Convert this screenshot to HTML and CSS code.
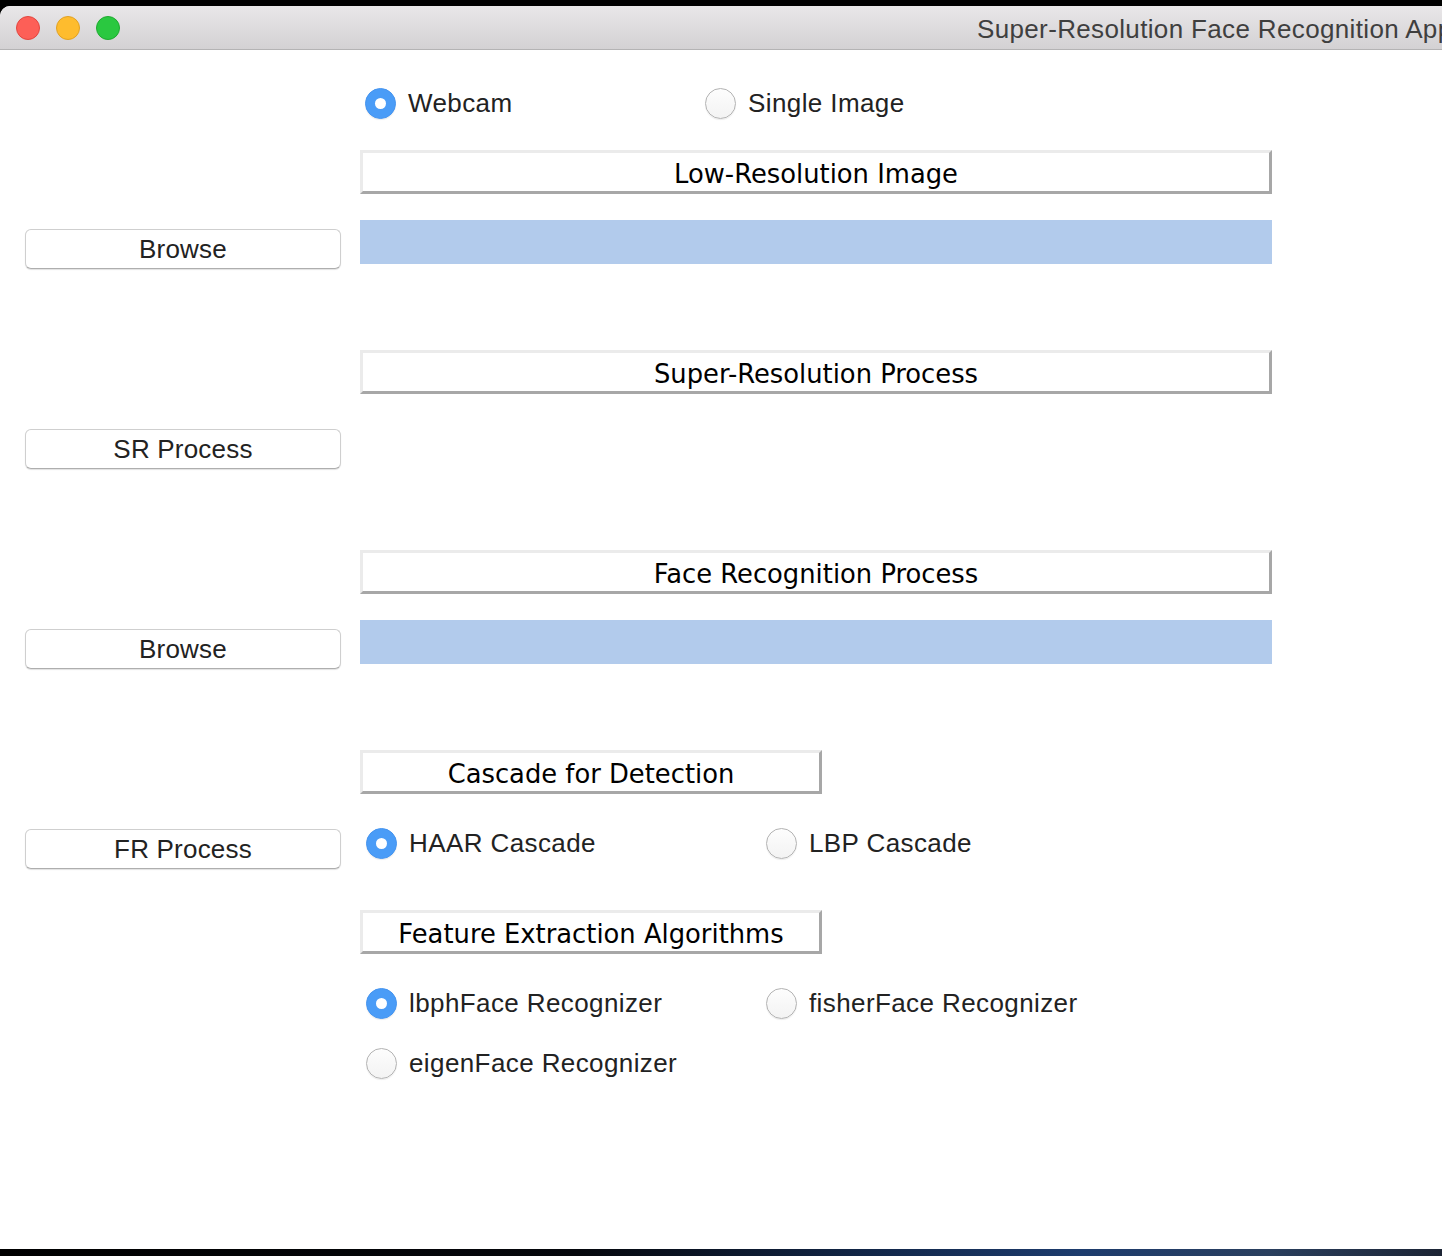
FILE: index.html
```html
<!DOCTYPE html>
<html>
<head>
<meta charset="utf-8">
<title>Super-Resolution Face Recognition App</title>
<link rel="stylesheet" href="styles.css">
</head>
<body>
<div class="screen">
  <div class="topband"></div>
  <div class="window">
    <div class="titlebar">
      <span class="light red"></span>
      <span class="light yellow"></span>
      <span class="light green"></span>
      <span class="title">Super-Resolution Face Recognition App</span>
    </div>
    <div class="content">
      <div class="leftcol">
        <div class="btn">Browse</div>
        <div class="btn">SR Process</div>
        <div class="btn">Browse</div>
        <div class="btn">FR Process</div>
      </div>
      <div class="rightcol">
        <div class="radiorow first">
          <div class="radio narrow"><span class="dot on"></span><span>Webcam</span></div>
          <div class="radio narrow"><span class="dot"></span><span>Single Image</span></div>
        </div>
        <div class="label wide l1">Low-Resolution Image</div>
        <div class="fill f1"></div>
        <div class="label wide l2">Super-Resolution Process</div>
        <div class="label wide l3">Face Recognition Process</div>
        <div class="fill f2"></div>
        <div class="label short l4">Cascade for Detection</div>
        <div class="radiorow r2">
          <div class="radio"><span class="dot on"></span><span>HAAR Cascade</span></div>
          <div class="radio"><span class="dot"></span><span>LBP Cascade</span></div>
        </div>
        <div class="label short l5">Feature Extraction Algorithms</div>
        <div class="radiorow r3">
          <div class="radio"><span class="dot on"></span><span>lbphFace Recognizer</span></div>
          <div class="radio"><span class="dot"></span><span>fisherFace Recognizer</span></div>
        </div>
        <div class="radiorow r4">
          <div class="radio"><span class="dot"></span><span>eigenFace Recognizer</span></div>
        </div>
      </div>
    </div>
  </div>
  <div class="bottomband"></div>
</div>
</body>
</html>
```
FILE: styles.css
```css
html, body {
  margin: 0;
  padding: 0;
  overflow: hidden;
  background: #000;
}
.screen {
  width: 1442px;
  height: 1256px;
  display: flex;
  flex-direction: column;
  font-family: "Liberation Sans", Arial, sans-serif;
}
.topband {
  height: 6px;
  background: #000;
}
.window {
  height: 1243px;
  display: flex;
  flex-direction: column;
  background: #fff;
  border-radius: 10px 0 0 0;
  overflow: hidden;
}
.titlebar {
  box-sizing: border-box;
  height: 44px;
  border-bottom: 1px solid #b4b3b4;
  background: linear-gradient(#e9e7e9, #d3d1d3);
  display: flex;
  align-items: center;
  padding-left: 16px;
  overflow: hidden;
  white-space: nowrap;
}
.light {
  width: 22px;
  height: 22px;
  border-radius: 50%;
  margin-right: 16px;
  flex: none;
}
.red { background: #fd5f57; border: 1px solid #e2463f; }
.yellow { background: #febc2e; border: 1px solid #e1a123; }
.green { background: #2ac840; border: 1px solid #1eaa2f; }
.title {
  margin-left: 841px;
  padding-top: 3px;
  font-size: 26px;
  letter-spacing: 0.35px;
  color: #3f3f3f;
  flex: none;
}
.content {
  flex: 1;
  display: flex;
  gap: 19px;
  padding-left: 25px;
}
.leftcol {
  width: 316px;
  display: flex;
  flex-direction: column;
  gap: 160px;
  padding-top: 179px;
}
.btn {
  box-sizing: border-box;
  height: 40px;
  background: #fff;
  border: 1px solid #cfcfcf;
  border-bottom-color: #aeaeae;
  border-radius: 6px;
  box-shadow: 0 1px 1px rgba(0,0,0,0.12);
  display: flex;
  align-items: center;
  justify-content: center;
  font-size: 26px;
  letter-spacing: 0.2px;
  color: #222;
}
.rightcol {
  width: 912px;
  display: flex;
  flex-direction: column;
}
.radiorow {
  display: flex;
  height: 32px;
  padding-left: 6px;
}
.radiorow.first { margin-top: 37px; padding-left: 5px; }
.radiorow.r2 { margin-top: 33px; }
.radiorow.r3 { margin-top: 33px; }
.radiorow.r4 { margin-top: 28px; }
.radio {
  width: 400px;
  display: flex;
  align-items: center;
  gap: 12px;
  font-size: 26px;
  letter-spacing: 0.4px;
  color: #222;
}
.radio.narrow { width: 340px; }
.dot {
  box-sizing: border-box;
  width: 31px;
  height: 31px;
  border-radius: 50%;
  border: 1px solid #b3b3b3;
  background: linear-gradient(#fdfdfd, #f3f3f3);
  box-shadow: 0 1px 1px rgba(0,0,0,0.08);
  flex: none;
  display: flex;
  align-items: center;
  justify-content: center;
}
.dot.on {
  background: #4a9cf7;
  border-color: #4695f0;
}
.dot.on::after {
  content: "";
  width: 11px;
  height: 11px;
  border-radius: 50%;
  background: #fff;
}
.label {
  box-sizing: border-box;
  height: 44px;
  padding-top: 4px;
  border: 3px solid;
  border-color: #ebebeb #a7a7a7 #a7a7a7 #ebebeb;
  background: #fff;
  display: flex;
  align-items: center;
  justify-content: center;
  font-family: "DejaVu Sans", sans-serif;
  font-size: 25.8px;
  color: #000;
}
.label.wide { width: 912px; }
.label.short { width: 462px; }
.l1 { margin-top: 31px; }
.l2 { margin-top: 86px; }
.l3 { margin-top: 156px; }
.l4 { margin-top: 86px; }
.l5 { margin-top: 51px; }
.fill {
  height: 44px;
  background: #b2cbec;
  margin-top: 26px;
}
.bottomband {
  height: 7px;
  background: linear-gradient(90deg, #000 0%, #05070c 40%, #13294d 62%, #1d3c6e 75%, #2a3f5e 88%, #1c2434 100%);
}
```
